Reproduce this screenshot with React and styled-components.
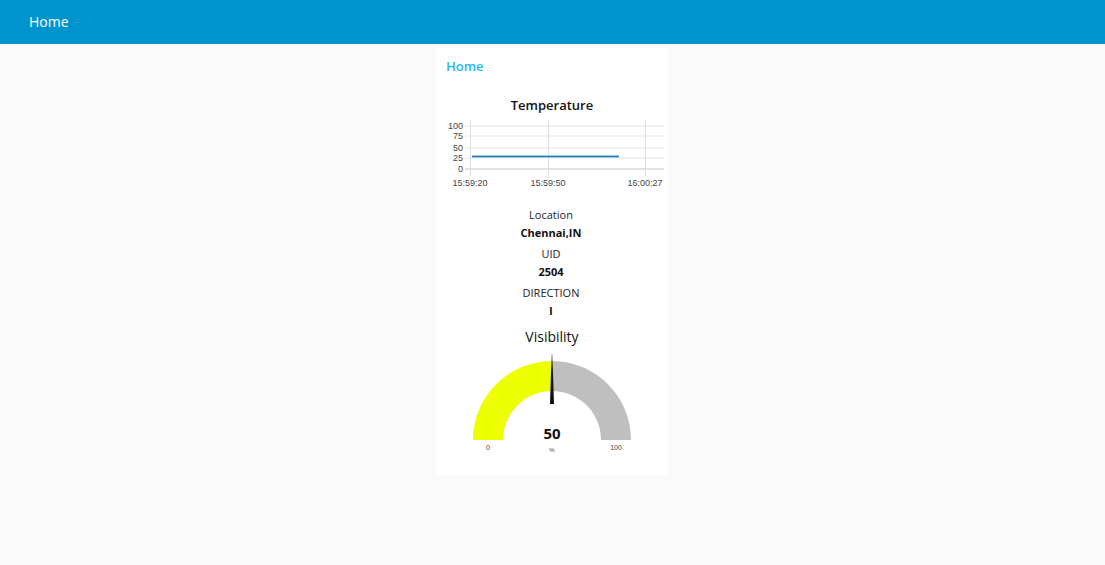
import React from 'react';
import styled, { createGlobalStyle } from 'styled-components';

const GlobalStyle = createGlobalStyle`
  * { box-sizing: border-box; }
  body {
    margin: 0;
    background: #fafafa;
    color: #111;
    font-family: "Segoe UI", "Open Sans", "Noto Sans", sans-serif;
  }
`;

const Toolbar = styled.header`
  display: flex;
  align-items: center;
  height: 44px;
  padding: 0 29px;
  background: #0094ce;
`;

const PageTitle = styled.h1`
  margin: 0;
  color: #fff;
  font-size: 14px;
  font-weight: 400;
  line-height: 20px;
`;

const Main = styled.main`
  display: flex;
  justify-content: center;
  padding: 4px 1px 4px 0;
`;

const Card = styled.section`
  display: flex;
  flex-direction: column;
  width: 232px;
  padding: 8px 0 20px;
  background: #fff;
`;

const GroupTitle = styled.h2`
  margin: 0;
  padding: 0 10px;
  color: #29b6f6;
  font-size: 13px;
  font-weight: 600;
  line-height: 20px;
`;

const Widget = styled.section`
  display: flex;
  flex-direction: column;
  align-items: center;
  padding-top: ${(p) => p.$space}px;
`;

const WidgetTitle = styled.h3`
  margin: 0;
  font-size: ${(p) => p.$size}px;
  font-weight: ${(p) => p.$weight};
  line-height: 20px;
`;

const Drawing = styled.svg`
  display: block;
  width: 100%;
  height: auto;
`;

const Tick = styled.text`
  fill: #444;
  font-family: "Liberation Sans", Arial, sans-serif;
  font-size: ${(p) => p.$size}px;
  text-anchor: ${(p) => p.$anchor || 'middle'};
`;

const Reading = styled.text`
  fill: #111;
  font-size: 15px;
  font-weight: 700;
  text-anchor: middle;
`;

const Facts = styled.dl`
  display: flex;
  flex-direction: column;
  align-items: center;
  gap: 3px;
  margin: 0;
  padding: 16px 2px 0 0;
`;

const Fact = styled.div`
  text-align: center;
  line-height: 18px;
`;

const Label = styled.dt`
  color: #222;
  font-size: 11px;
`;

const Value = styled.dd`
  margin: 0;
  font-size: 11px;
  font-weight: 700;
`;

const levels = [
  { label: '100', y: 11 },
  { label: '75', y: 21 },
  { label: '50', y: 33 },
  { label: '25', y: 43 },
  { label: '0', y: 54 },
];

const times = [
  { label: '15:59:20', x: 34 },
  { label: '15:59:50', x: 112 },
  { label: '16:00:27', x: 209 },
];

const facts = [
  { label: 'Location', value: 'Chennai,IN' },
  { label: 'UID', value: '2504' },
  { label: 'DIRECTION', value: 'l' },
];

function TemperatureChart() {
  return (
    <Drawing viewBox="0 0 232 75" role="img" aria-label="Temperature over time">
      {levels.map(({ label, y }) => (
        <g key={label}>
          <rect x="29" y={y - 1} width="199" height="2" fill={label === '0' ? '#e2e2e2' : '#f1f1f1'} />
          <Tick x="27" y={y + 3} $size={9} $anchor="end">{label}</Tick>
        </g>
      ))}
      {times.map(({ label, x }) => (
        <g key={label}>
          <rect x={x} y="5" width="1" height="56" fill="#dedede" />
          <Tick x={x} y="71" $size={9}>{label}</Tick>
        </g>
      ))}
      <rect x="36" y="40" width="147" height="3" fill="#a3cbe6" />
      <rect x="36" y="41" width="147" height="1" fill="#1f77b4" />
    </Drawing>
  );
}

function VisibilityGauge() {
  return (
    <Drawing viewBox="0 0 232 108" role="img" aria-label="Visibility 50 percent">
      <defs>
        <linearGradient id="needle" x1="0" y1="0" x2="0" y2="1">
          <stop offset="0" stopColor="#111" stopOpacity="0.5" />
          <stop offset="0.35" stopColor="#111" />
        </linearGradient>
      </defs>
      <path d="M37 93A79 79 0 0 1 116 14V44A49 49 0 0 0 67 93Z" fill="#edff00" />
      <path d="M116 14A79 79 0 0 1 195 93H165A49 49 0 0 0 116 44Z" fill="#bfbfbf" />
      <path d="M115.6 7H116.4L118 57H114Z" fill="url(#needle)" />
      <Reading x="116" y="92">50</Reading>
      <Tick x="52" y="103" $size={7}>0</Tick>
      <Tick x="116" y="105" $size={6}>%</Tick>
      <Tick x="180" y="103" $size={7}>100</Tick>
    </Drawing>
  );
}

export default function App() {
  return (
    <>
      <GlobalStyle />
      <Toolbar>
        <PageTitle>Home</PageTitle>
      </Toolbar>
      <Main>
        <Card>
          <GroupTitle>Home</GroupTitle>
          <Widget $space={19}>
            <WidgetTitle $size={13} $weight={600}>Temperature</WidgetTitle>
            <TemperatureChart />
          </Widget>
          <Facts>
            {facts.map(({ label, value }) => (
              <Fact key={label}>
                <Label>{label}</Label>
                <Value>{value}</Value>
              </Fact>
            ))}
          </Facts>
          <Widget $space={7}>
            <WidgetTitle $size={14} $weight={500}>Visibility</WidgetTitle>
            <VisibilityGauge />
          </Widget>
        </Card>
      </Main>
    </>
  );
}
